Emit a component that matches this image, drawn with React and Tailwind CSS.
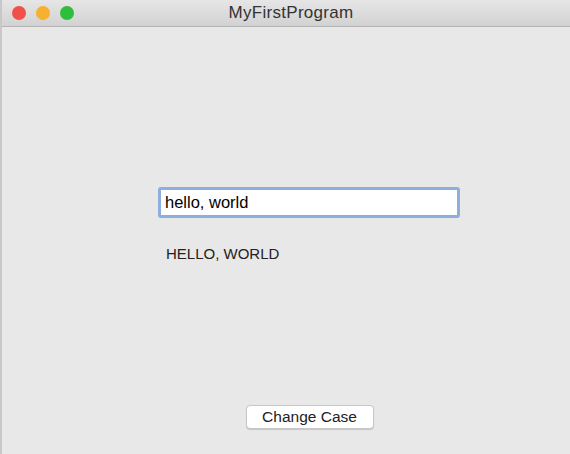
import React, { useState } from "react";

function App() {
	const [text, setText] = useState("hello, world");
	const [label, setLabel] = useState("HELLO, WORLD");

	return (
		<div className="w-[570px] h-[454px] bg-[#e8e8e8] flex flex-col border-l-2 border-[#c8c8c8] font-['Liberation_Sans',Arial,sans-serif]">
			{/* Title bar */}
			<div className="relative h-[27px] flex items-center bg-gradient-to-b from-[#e6e6e6] to-[#d2d2d2] border-b border-[#b4b4b4]">
				<div className="flex items-center gap-[10px] pl-[10px]">
					<span className="w-[14px] h-[14px] rounded-full bg-[#f1504a]" />
					<span className="w-[14px] h-[14px] rounded-full bg-[#f6b12e]" />
					<span className="w-[14px] h-[14px] rounded-full bg-[#2fbd3c]" />
				</div>
				<div className="absolute inset-0 flex items-center justify-center text-[17px] tracking-[0.3px] text-[#333] pl-[10px]">MyFirstProgram</div>
			</div>

			{/* Body */}
			<div className="flex-1 flex flex-col">
				<div className="pt-[160px] pl-[156px]">
					<div className="w-[302px] h-[31px] rounded-[3px] border-[3px] border-[#8eaedd] bg-white flex items-center pl-[4px]">
						<input
							autoFocus
							value={text}
							onChange={(e) => setText(e.target.value)}
							className="w-full outline-none bg-transparent text-[16.5px] text-black caret-black"
						/>
					</div>
					<div className="mt-[25px] pl-[8px] text-[15px] text-[#222]">{label}</div>
				</div>
				<div className="flex-1" />
				<div className="flex justify-center pb-[25px] pl-[47px]">
					<button
						onClick={() => setLabel(text.toUpperCase())}
						className="w-[128px] h-[24px] rounded-[4px] bg-white border border-[#c6c6c6] shadow-[0_1px_1px_rgba(0,0,0,0.15)] text-[15.5px] text-[#222] flex items-center justify-center"
					>
						Change Case
					</button>
				</div>
			</div>
		</div>
	);
}

export default App;
